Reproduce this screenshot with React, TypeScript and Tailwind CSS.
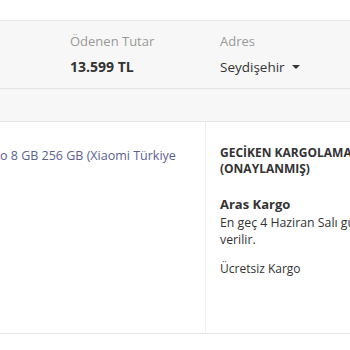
const App = () => {
  return (
    <div
      className="w-[350px] h-[350px] overflow-hidden bg-white text-[#333]"
      style={{ fontFamily: '"Open Sans", "Noto Sans", sans-serif' }}
    >
      <div className="h-[20px]" />

      {/* summary bar */}
      <div className="h-[69px] bg-[#f7f7f7] border-y border-[#e6e6e6] flex pl-[70px] pt-[11px]">
        <div className="w-[150px]">
          <div className="text-[13px] leading-[18px] text-[#999]">Ödenen Tutar</div>
          <div className="mt-[7px] text-[14px] leading-[20px] font-bold">13.599 TL</div>
        </div>
        <div>
          <div className="text-[13px] leading-[18px] text-[#999]">Adres</div>
          <div className="mt-[7px] text-[13.5px] leading-[20px] flex items-center">
            Seydişehir
            <span className="ml-[7px] w-0 h-0 border-x-[4px] border-x-transparent border-t-[4px] border-t-[#333]" />
          </div>
        </div>
      </div>

      <div className="h-[32px] bg-[#f7f7f7]" />

      {/* package */}
      <div className="h-[213px] border-y border-[#e6e6e6] flex">
        <div className="w-[206px] shrink-0 border-r border-[#eee] pt-[24px] overflow-hidden">
          <div className="text-[12.5px] leading-[20px] text-[#5c5f8f] whitespace-nowrap">
            o 8 GB 256 GB (Xiaomi Türkiye
          </div>
        </div>
        <div className="flex-1 min-w-0 pl-[14px] pt-[23px] whitespace-nowrap overflow-hidden">
          <div className="text-[12px] leading-[16px] font-bold">
            GECİKEN KARGOLAMA
            <br />
            (ONAYLANMIŞ)
          </div>
          <div className="mt-[17px] text-[13px] leading-[20px] font-bold">Aras Kargo</div>
          <div className="text-[12.3px] leading-[17px]">
            En geç 4 Haziran Salı günü kargoya
            <br />
            verilir.
          </div>
          <div className="mt-[12px] text-[12px] leading-[17px]">Ücretsiz Kargo</div>
        </div>
      </div>
    </div>
  );
};

export default App;
